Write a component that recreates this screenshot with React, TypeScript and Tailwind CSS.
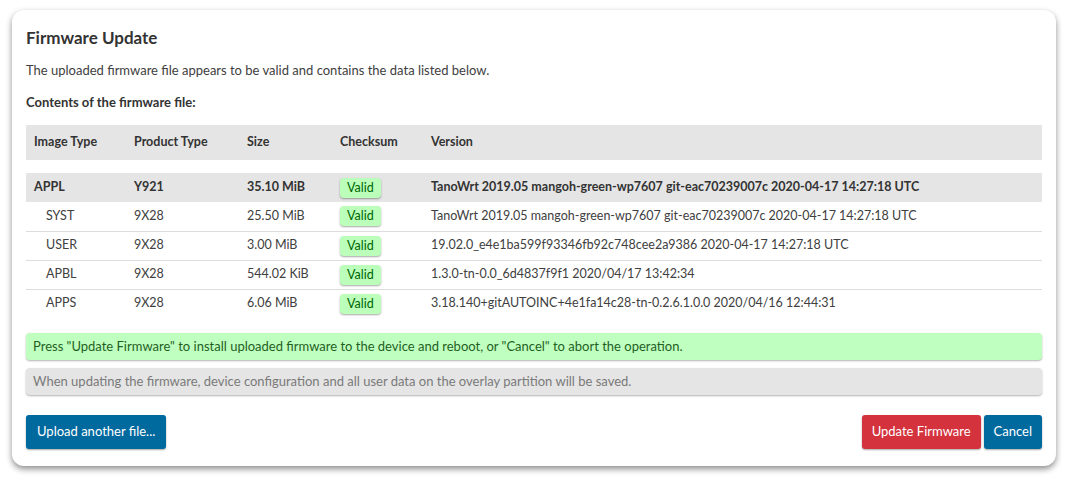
// Firmware update confirmation card: lists the images found in the uploaded file.

const ROWS = [
  { image: "SYST", product: "9X28", size: "25.50 MiB", version: "TanoWrt 2019.05 mangoh-green-wp7607 git-eac70239007c 2020-04-17 14:27:18 UTC" },
  { image: "USER", product: "9X28", size: "3.00 MiB", version: "19.02.0_e4e1ba599f93346fb92c748cee2a9386 2020-04-17 14:27:18 UTC" },
  { image: "APBL", product: "9X28", size: "544.02 KiB", version: "1.3.0-tn-0.0_6d4837f9f1 2020/04/17 13:42:34" },
  { image: "APPS", product: "9X28", size: "6.06 MiB", version: "3.18.140+gitAUTOINC+4e1fa14c28-tn-0.2.6.1.0.0 2020/04/16 12:44:31" },
];

function ValidBadge() {
  return (
    <span className="inline-block rounded-[4px] bg-[#bbffbb] px-[7px] font-normal leading-[20px] text-[#006600] shadow-[0_1px_2px_rgba(0,0,0,0.35)]">
      Valid
    </span>
  );
}

export default function App() {
  return (
    <div className="min-h-screen bg-white pt-[10px] pl-[12px] pr-[13px] font-['Lato','Liberation_Sans',sans-serif] text-[13px] text-[#404040]">
      <div className="rounded-[12px] bg-white px-[14px] pt-[18px] pb-[17px] shadow-[0_3px_6px_rgba(0,0,0,0.45)]">
        <h2 className="text-[17px] font-bold leading-[20px] text-[#333]">Firmware Update</h2>
        <p className="mt-[14px] leading-[16px]">
          The uploaded firmware file appears to be valid and contains the data listed below.
        </p>
        <p className="mt-[16px] font-bold leading-[16px] text-[#333]">Contents of the firmware file:</p>

        <table className="mt-[15px] w-full table-fixed border-collapse text-left text-[12.5px]">
          <colgroup>
            <col className="w-[108px]" />
            <col className="w-[113px]" />
            <col className="w-[93px]" />
            <col className="w-[91px]" />
            <col />
          </colgroup>
          <thead>
            <tr className="h-[35px] bg-[#e5e5e5] text-[#333]">
              <th className="pl-[8px] font-bold">Image Type</th>
              <th className="font-bold">Product Type</th>
              <th className="font-bold">Size</th>
              <th className="font-bold">Checksum</th>
              <th className="font-bold">Version</th>
            </tr>
          </thead>
          <tbody>
            <tr className="h-[13px]">
              <td colSpan={5}></td>
            </tr>
            <tr className="h-[29px] bg-[#e5e5e5] font-bold text-[#333]">
              <td className="pl-[8px]">APPL</td>
              <td>Y921</td>
              <td>35.10 MiB</td>
              <td><ValidBadge /></td>
              <td className="whitespace-nowrap">TanoWrt 2019.05 mangoh-green-wp7607 git-eac70239007c 2020-04-17 14:27:18 UTC</td>
            </tr>
            {ROWS.map((row, i) => (
              <tr
                key={row.image}
                className={i < ROWS.length - 1 ? "h-[29px] border-b border-[#dddddd]" : "h-[29px]"}
              >
                <td className="pl-[20px]">{row.image}</td>
                <td>{row.product}</td>
                <td>{row.size}</td>
                <td><ValidBadge /></td>
                <td className="whitespace-nowrap">{row.version}</td>
              </tr>
            ))}
          </tbody>
        </table>

        <div className="mt-[15px] rounded-[4px] bg-[#bfffbf] px-[7px] py-[5px] leading-[17px] text-[#1f5f1f] shadow-[0_1px_2px_rgba(0,0,0,0.3)]">
          Press "Update Firmware" to install uploaded firmware to the device and reboot, or "Cancel" to abort the operation.
        </div>
        <div className="mt-[8px] rounded-[4px] bg-[#e5e5e5] px-[7px] py-[5px] leading-[17px] text-[#7a7a7a] shadow-[0_1px_2px_rgba(0,0,0,0.3)]">
          When updating the firmware, device configuration and all user data on the overlay partition will be saved.
        </div>

        <div className="mt-[20px] flex items-center">
          <button className="h-[34px] rounded-[3px] bg-[#00699e] px-[11px] text-white shadow-[0_1px_2px_rgba(0,0,0,0.35)]">
            Upload another file...
          </button>
          <div className="ml-auto flex gap-[3px]">
            <button className="h-[34px] rounded-[3px] bg-[#d4323d] px-[10px] text-white shadow-[0_1px_2px_rgba(0,0,0,0.35)]">
              Update Firmware
            </button>
            <button className="h-[34px] rounded-[3px] bg-[#00699e] px-[10px] text-white shadow-[0_1px_2px_rgba(0,0,0,0.35)]">
              Cancel
            </button>
          </div>
        </div>
      </div>
    </div>
  );
}
